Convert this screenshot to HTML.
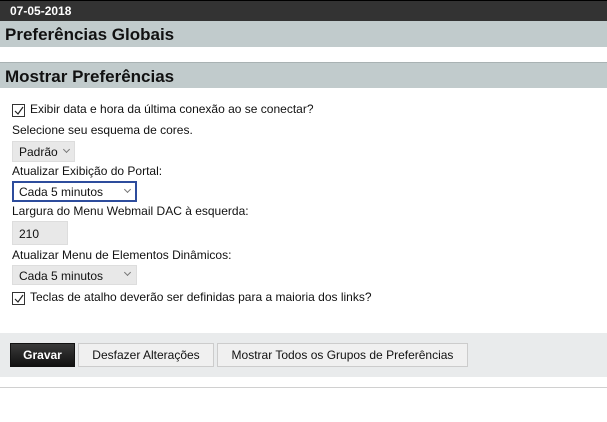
<!DOCTYPE html>
<html><head><style>
*{margin:0;padding:0;box-sizing:border-box}
body{width:607px;height:422px;background:#fff;font-family:"Liberation Sans",Arial,sans-serif;color:#111;position:relative;overflow:hidden}
.a{position:absolute}
.t{font-size:12px;line-height:14px;white-space:nowrap}
.bar{left:0;top:0;width:607px;height:21px;background:#333;border-top:1px solid #000;color:#fff;font-weight:bold;font-size:12px;padding:3px 0 0 10px}
.band{left:0;width:607px;height:26px;background:#c1cbcc;font-weight:bold;font-size:17px;padding:4px 0 0 5px}
.cb{width:13px;height:13px;border:1px solid #333;background:#fff}
.sel{background:#e8e8e8;border:1px solid #ddd;font-size:12px;padding:3px 0 0 6px}
.chev{position:absolute;width:5px;height:5px;border-right:1px solid #777;border-bottom:1px solid #777;transform:rotate(45deg)}
.btn{top:343px;height:24px;border:1px solid #ccc;background:#f0f0f0;font-size:12px;text-align:center;line-height:22px}
</style></head><body>
<div class="a bar">07-05-2018</div>
<div class="a band" style="top:21px">Preferências Globais</div>
<div class="a band" style="top:62px;border-top:1px solid #a9b2b3">Mostrar Preferências</div>

<div class="a cb" style="left:12px;top:104px"><svg width="11" height="11" style="position:absolute;left:0;top:0"><path d="M2 6 L5 9 L10 2" stroke="#222" stroke-width="1.2" fill="none"/></svg></div>
<div class="a t" style="left:30px;top:102px">Exibir data e hora da última conexão ao se conectar?</div>
<div class="a t" style="left:12px;top:123px">Selecione seu esquema de cores.</div>
<div class="a sel" style="left:12px;top:141px;width:63px;height:21px">Padrão<span class="chev" style="left:51px;top:5px"></span></div>
<div class="a t" style="left:12px;top:164px">Atualizar Exibição do Portal:</div>
<div class="a sel" style="left:12px;top:181px;width:125px;height:21px;background:#fff;border:1px solid #2d4c9c;box-shadow:0 0 0 1px #2d4c9c inset">Cada 5 minutos<span class="chev" style="left:112px;top:5px"></span></div>
<div class="a t" style="left:12px;top:204px">Largura do Menu Webmail DAC à esquerda:</div>
<div class="a sel" style="left:12px;top:221px;width:56px;height:24px;padding-top:5px">210</div>
<div class="a t" style="left:12px;top:248px">Atualizar Menu de Elementos Dinâmicos:</div>
<div class="a sel" style="left:12px;top:265px;width:125px;height:20px">Cada 5 minutos<span class="chev" style="left:112px;top:4px"></span></div>
<div class="a cb" style="left:12px;top:292px"><svg width="11" height="11" style="position:absolute;left:0;top:0"><path d="M2 6 L5 9 L10 2" stroke="#222" stroke-width="1.2" fill="none"/></svg></div>
<div class="a t" style="left:30px;top:290px">Teclas de atalho deverão ser definidas para a maioria dos links?</div>

<div class="a" style="left:0;top:333px;width:607px;height:44px;background:#e9ebec"></div>
<div class="a btn" style="left:10px;width:65px;background:linear-gradient(#3a3a3a,#111);border-color:#111;color:#fff;font-weight:bold">Gravar</div>
<div class="a btn" style="left:78px;width:136px">Desfazer Alterações</div>
<div class="a btn" style="left:217px;width:251px">Mostrar Todos os Grupos de Preferências</div>
<div class="a" style="left:0;top:387px;width:607px;height:1px;background:#d0d0d0"></div>
</body></html>
